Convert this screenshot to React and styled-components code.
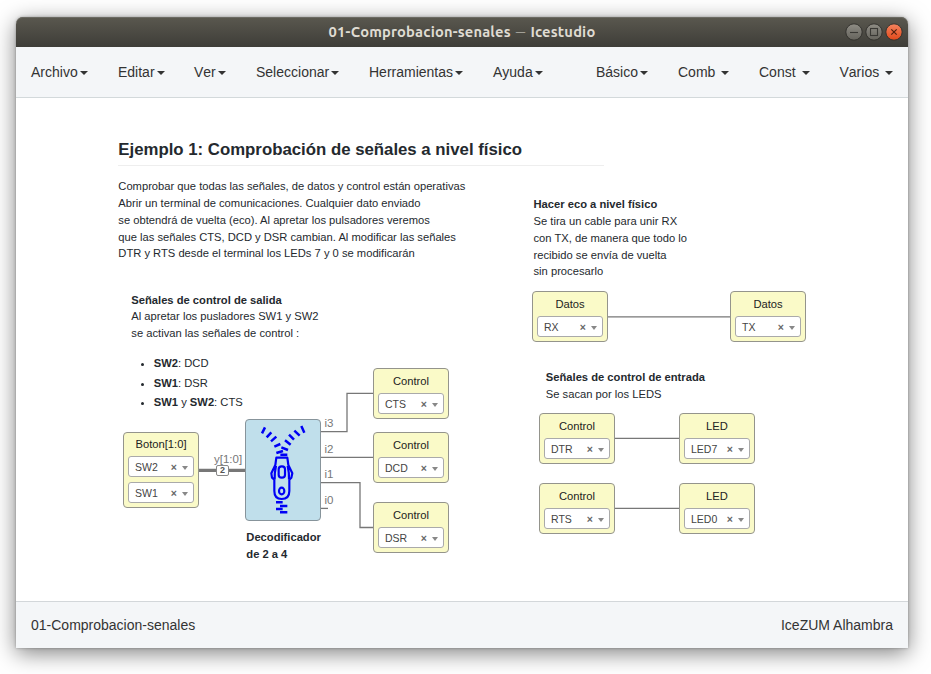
import React from "react";
import styled, { createGlobalStyle } from "styled-components";

const GlobalStyle = createGlobalStyle`
  * { box-sizing: border-box; }
  body {
    margin: 0;
    background: #fff;
    font-family: "Liberation Sans", Arial, sans-serif;
    overflow: hidden;
  }
`;

const Desktop = styled.div`
  width: 931px;
  height: 674px;
  padding: 17px 23px 26px 16px;
  overflow: hidden;
`;

const Window = styled.main`
  display: flex;
  flex-direction: column;
  height: 631px;
  background: #fff;
  border-radius: 7px 7px 0 0;
  box-shadow: 0 5px 22px rgba(0, 0, 0, 0.5), 0 0 3px rgba(0, 0, 0, 0.3);
`;

const TitleBar = styled.header`
  display: grid;
  grid-template-columns: 1fr auto 1fr;
  align-items: center;
  flex: none;
  height: 30px;
  padding-right: 5px;
  border-radius: 7px 7px 0 0;
  background: linear-gradient(#5a584f, #3e3d38);
  box-shadow: inset 0 1px 0 #6b6a62;
`;

const Title = styled.h1`
  grid-column: 2;
  display: flex;
  align-items: center;
  gap: 5px;
  margin: 0 0 0 5px;
  font: bold 14.7px/20px Ubuntu, "Noto Sans", sans-serif;
  letter-spacing: 0.18px;
  color: #dfdbd2;
  white-space: nowrap;
`;

const Dash = styled.span`
  font-size: 9.5px;
  font-weight: normal;
`;

const WindowButtons = styled.div`
  display: flex;
  justify-content: flex-end;
  gap: 2px;
`;

const MenuBar = styled.nav`
  display: flex;
  justify-content: space-between;
  flex: none;
  height: 51px;
  background: #f4f6f8;
  border-bottom: 1px solid #d3d9db;
`;

const MenuGroup = styled.div`
  display: flex;
`;

const MenuItem = styled.button`
  display: flex;
  align-items: center;
  width: ${(p) => p.$width}px;
  height: 50px;
  padding: 0 0 0 15px;
  border: 0;
  background: none;
  font: 14px/20px "Liberation Sans", Arial, sans-serif;
  font-kerning: none;
  color: #333;
  white-space: pre;
`;

const Caret = styled.i`
  margin-left: ${(p) => (p.$spaced ? 6 : 2)}px;
  margin-top: 1px;
  border: 4px solid transparent;
  border-top-color: #333;
  border-bottom: 0;
`;

const Canvas = styled.section`
  position: relative;
  flex: 1;
  color: #24292e;
`;

const Wires = styled.svg`
  position: absolute;
  inset: 0;
  display: block;
`;

const Placed = styled.div`
  position: absolute;
  left: ${(p) => p.$x - 16}px;
  top: ${(p) => p.$y - 98}px;
`;

const Heading = styled.h2`
  width: 486px;
  height: 27px;
  margin: 0;
  border-bottom: 1px solid #eee;
  font-size: 16.8px;
  line-height: 21px;
`;

const Note = styled.p`
  margin: 0;
  font-size: 11.2px;
  line-height: 16.8px;
  white-space: pre;
`;

const SignalList = styled.ul`
  margin: 13px 0 0;
  padding-left: 22.5px;
  font-size: 11.2px;
  line-height: 16.8px;

  li + li { margin-top: 2.8px; }
`;

const Block = styled(Placed)`
  display: flex;
  flex-direction: column;
  gap: 5px;
  width: 76px;
  padding: ${(p) => (p.$tight ? 4 : 5)}px 4px 4px;
  border: 1px solid #94948c;
  border-radius: 4px;
  background: #fafac8;
`;

const BlockTitle = styled.div`
  height: 14px;
  font-size: 11.2px;
  line-height: 14px;
  text-align: center;
  color: #222;
`;

const PinSelect = styled.div`
  display: flex;
  align-items: center;
  height: 21px;
  padding: 0 5px 0 6px;
  border: 1px solid #aaa;
  border-radius: 3px;
  background: #fff;
  font-size: 10.5px;
  color: #444;
`;

const PinName = styled.span`
  flex: 1;
`;

const Clear = styled.span`
  margin-right: 5px;
  font-size: 10.5px;
  font-weight: bold;
  color: #666;
`;

const PinArrow = styled.i`
  margin-top: 2px;
  border: 3px solid transparent;
  border-top: 4px solid #888;
  border-bottom: 0;
`;

const CodeBlock = styled(Placed)`
  width: 76px;
  height: 102px;
  border: 1px solid #87949b;
  border-radius: 4px;
  background: #c0dfeb;
`;

const PortLabel = styled(Placed)`
  font-size: 11.5px;
  line-height: 13px;
  color: #777;
`;

const BusSize = styled(Placed)`
  width: 13px;
  height: 11px;
  border: 1px solid #888;
  border-radius: 2px;
  background: #fff;
  font-size: 9px;
  font-weight: bold;
  line-height: 9px;
  text-align: center;
  color: #555;
`;

const StatusBar = styled.footer`
  display: flex;
  justify-content: space-between;
  align-items: center;
  flex: none;
  height: 47px;
  padding: 0 15px;
  border-top: 1px solid #d3d7da;
  background: #f4f6f8;
  font-size: 14px;
  color: #333;
`;

const LEFT_MENU = [
  ["Archivo", 87], ["Editar", 76], ["Ver", 62],
  ["Seleccionar", 113], ["Herramientas", 124], ["Ayuda", 80],
];
const RIGHT_MENU = [
  ["Básico", 82], ["Comb", 81, true], ["Const", 80.5, true], ["Varios", 83.5, true],
];

const BLOCKS = [
  { title: "Boton[1:0]", pins: ["SW2", "SW1"], x: 123, y: 432 },
  { title: "Control", pins: ["CTS"], x: 373, y: 368 },
  { title: "Control", pins: ["DCD"], x: 373, y: 432 },
  { title: "Control", pins: ["DSR"], x: 373, y: 502 },
  { title: "Datos", pins: ["RX"], x: 532, y: 291 },
  { title: "Datos", pins: ["TX"], x: 730, y: 291 },
  { title: "Control", pins: ["DTR"], x: 539, y: 413 },
  { title: "LED", pins: ["LED7"], x: 679, y: 413 },
  { title: "Control", pins: ["RTS"], x: 539, y: 483 },
  { title: "LED", pins: ["LED0"], x: 679, y: 483 },
];

const PORTS = [["i3", 417], ["i2", 443], ["i1", 468], ["i0", 494]];

function Menu({ items }) {
  return (
    <MenuGroup>
      {items.map(([label, width, spaced]) => (
        <MenuItem key={label} $width={width}>
          {label}
          <Caret $spaced={spaced} />
        </MenuItem>
      ))}
    </MenuGroup>
  );
}

function WindowButton({ kind }) {
  const close = kind === "close";
  const id = "fill-" + kind;
  return (
    <svg width="18" height="18" viewBox="0 0 18 18">
      <defs>
        <linearGradient id={id} x2="0" y2="1">
          <stop stopColor={close ? "#f4845f" : "#8f8d85"} />
          <stop offset="1" stopColor={close ? "#e0481a" : "#65635c"} />
        </linearGradient>
      </defs>
      <circle cx="9" cy="9" r="8.2" fill={`url(#${id})`} stroke="#33322e" />
      <g fill="none" stroke={close ? "#51200f" : "#3a3935"} strokeWidth="1.1">
        {kind === "minimize" && <path d="M5 9.5h8" />}
        {kind === "maximize" && <rect x="5.5" y="5.5" width="7" height="7" />}
        {close && <path d="M6.3 6.3l5.4 5.4M11.7 6.3l-5.4 5.4" strokeWidth="1.2" />}
      </g>
    </svg>
  );
}

function PinBlock({ title, pins, x, y }) {
  return (
    <Block $x={x} $y={y} $tight={pins.length > 1}>
      <BlockTitle>{title}</BlockTitle>
      {pins.map((pin) => (
        <PinSelect key={pin}>
          <PinName>{pin}</PinName>
          <Clear>×</Clear>
          <PinArrow />
        </PinSelect>
      ))}
    </Block>
  );
}

function Connections() {
  return (
    <Wires width="892" height="503" viewBox="16 98 892 503">
      <g fill="none" stroke="#777" strokeWidth="1.3">
        <path d="M321 431.7H347V393.3H373" />
        <path d="M321 457.4H373" />
        <path d="M321 482.7H360V527.5H373" />
        <path d="M321 508.4H328" />
        <path d="M608 316.8H730" />
        <path d="M615 438.3H679" />
        <path d="M615 508.4H679" />
        <path d="M199 470.3H245" strokeWidth="3.2" />
      </g>
    </Wires>
  );
}

function Zipper() {
  return (
    <svg width="74" height="100" viewBox="408 30 222 300">
      <g fill="none" stroke="#0000f5" strokeLinejoin="round">
        <path
          strokeWidth="7.5"
          d="M456 70l9-18M470 82l14-15M483 94l16-14M493 110l18-8M499 129l20-6M511 134h21
             M574 48l9 20M553 62l16 15M537 74l15 15M525 91l17 13M514 112l20 8
             M498 277h20M510 288h22M498 297h20M510 307h22"
        />
        <path
          strokeWidth="6.5"
          d="M499 143H532L535 165L547 190L544 203L538 209V243Q538 267 515 267Q493 267 493 243V209L486 203L484 190L496 165Z
             M498 167Q493 190 494 209M533 167Q538 190 537 209"
        />
        <rect x="506" y="169" width="19" height="34" rx="9" strokeWidth="6.5" />
        <ellipse cx="515" cy="243" rx="8" ry="10" strokeWidth="6.5" />
      </g>
    </svg>
  );
}

export default function App() {
  return (
    <Desktop>
      <GlobalStyle />
      <Window>
        <TitleBar>
          <Title>
            <span>01-Comprobacion-senales</span>
            <Dash>—</Dash>
            <span>Icestudio</span>
          </Title>
          <WindowButtons>
            <WindowButton kind="minimize" />
            <WindowButton kind="maximize" />
            <WindowButton kind="close" />
          </WindowButtons>
        </TitleBar>
        <MenuBar>
          <Menu items={LEFT_MENU} />
          <Menu items={RIGHT_MENU} />
        </MenuBar>
        <Canvas>
          <Placed $x={118.3} $y={138.5}>
            <Heading>Ejemplo 1: Comprobación de señales a nivel físico</Heading>
          </Placed>
          <Placed $x={118.3} $y={178.3}>
            <Note>{`Comprobar que todas las señales, de datos y control están operativas
Abrir un terminal de comunicaciones. Cualquier dato enviado
se obtendrá de vuelta (eco). Al apretar los pulsadores veremos
que las señales CTS, DCD y DSR cambian. Al modificar las señales
DTR y RTS desde el terminal los LEDs 7 y 0 se modificarán`}</Note>
          </Placed>
          <Placed $x={131.3} $y={291.7}>
            <Note>
              <b>Señales de control de salida</b>
              {`
Al apretar los pusladores SW1 y SW2
se activan las señales de control :`}
            </Note>
            <SignalList>
              <li><b>SW2</b>: DCD</li>
              <li><b>SW1</b>: DSR</li>
              <li><b>SW1</b> y <b>SW2</b>: CTS</li>
            </SignalList>
          </Placed>
          <Placed $x={533.5} $y={196.3}>
            <Note>
              <b>Hacer eco a nivel físico</b>
              {`
Se tira un cable para unir RX
con TX, de manera que todo lo
recibido se envía de vuelta
sin procesarlo`}
            </Note>
          </Placed>
          <Placed $x={545.8} $y={369}>
            <Note>
              <b>Señales de control de entrada</b>
              {`
Se sacan por los LEDS`}
            </Note>
          </Placed>
          <Placed $x={246.3} $y={529}>
            <Note>
              <b>{`Decodificador
de 2 a 4`}</b>
            </Note>
          </Placed>
          <Connections />
          {BLOCKS.map((b) => (
            <PinBlock key={b.title + b.pins[0]} {...b} />
          ))}
          <CodeBlock $x={245} $y={419}>
            <Zipper />
          </CodeBlock>
          {PORTS.map(([name, y]) => (
            <PortLabel key={name} $x={324.5} $y={y}>{name}</PortLabel>
          ))}
          <PortLabel $x={214} $y={453}>y[1:0]</PortLabel>
          <BusSize $x={216} $y={464.5}>2</BusSize>
        </Canvas>
        <StatusBar>
          <span>01-Comprobacion-senales</span>
          <span>IceZUM Alhambra</span>
        </StatusBar>
      </Window>
    </Desktop>
  );
}
